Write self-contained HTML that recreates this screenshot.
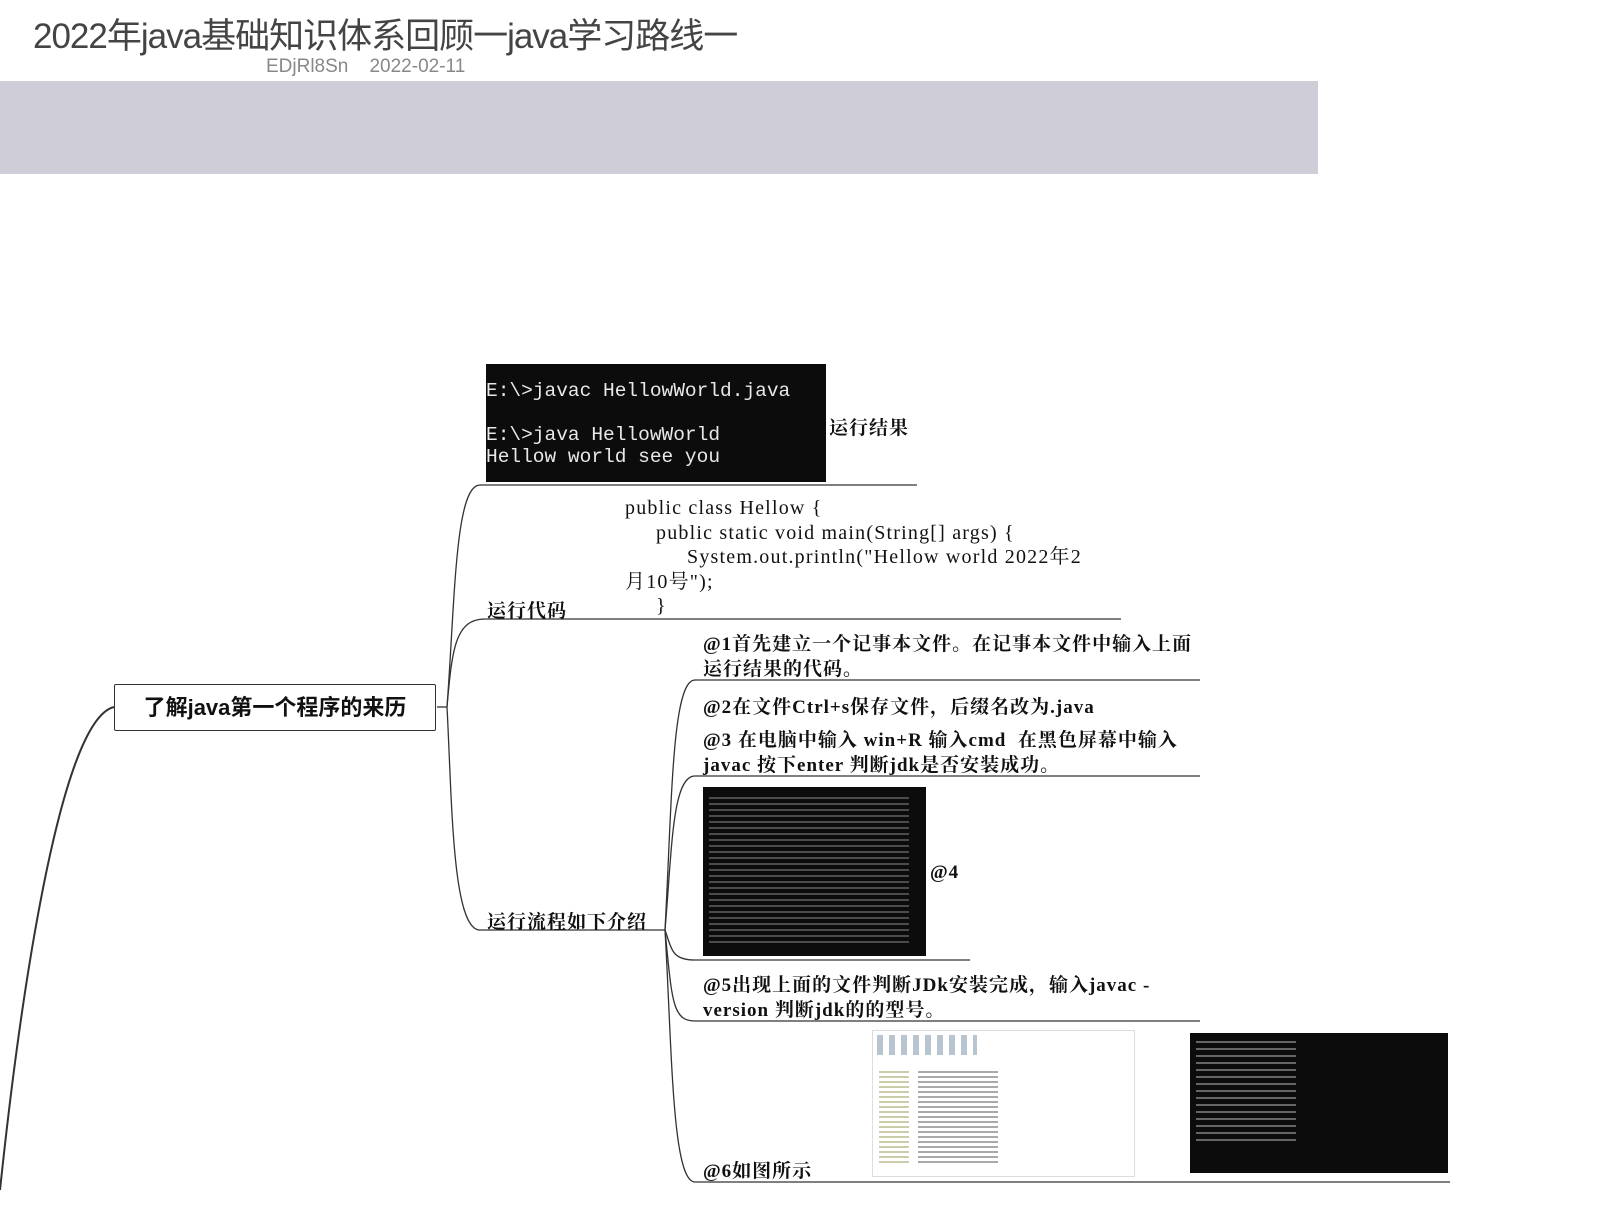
<!DOCTYPE html>
<html><head><meta charset="utf-8"><style>
body{margin:0;width:1598px;height:1221px;background:#fff;position:relative;overflow:hidden;font-family:"Liberation Sans","Noto Sans CJK SC",sans-serif}
.a{position:absolute;white-space:nowrap}
.s{font-family:"Liberation Serif","Noto Serif CJK SC",serif;font-size:19px;color:#111;font-weight:bold;letter-spacing:1px}
.m{font-family:"Liberation Mono","Noto Sans CJK SC",monospace;color:#e8e8e8;font-size:19.5px;line-height:22px}
</style></head><body>
<div class="a" style="left:33px;top:8px;font-size:35px;color:#444;letter-spacing:-1px">2022年java基础知识体系回顾一java学习路线一</div>
<div class="a" style="left:266px;top:56px;font-size:19px;color:#888">EDjRl8Sn&nbsp;&nbsp;&nbsp;&nbsp;2022-02-11</div>
<div class="a" style="left:0;top:81px;width:1318px;height:93px;background:#cfced8"></div>

<svg class="a" style="left:0;top:0" width="1598" height="1221">
<g fill="none" stroke="#333" stroke-width="1.3">
<path d="M0 1190 C20 1000 60 720 114 707" stroke-width="2"/>
<path d="M437 707 L447 707"/>
<path d="M447 707 C455 600 455 485 480 485 L917 485"/>
<path d="M447 707 C452 650 455 619 485 619 L1121 619"/>
<path d="M447 707 C452 800 452 930 480 930 L665 930"/>
<path d="M665 930 C672 800 672 680 695 680 L1200 680"/>
<path d="M665 930 C672 850 672 776 695 776 L1200 776"/>
<path d="M665 930 C672 950 672 960 695 960 L970 960"/>
<path d="M665 930 C672 1000 672 1021 695 1021 L1200 1021"/>
<path d="M665 930 C672 1050 672 1182 695 1182 L1450 1182"/>
</g></svg>

<div class="a" style="left:114px;top:684px;width:320px;height:45px;border:1.5px solid #333;border-radius:2px;font-size:22px;font-weight:bold;color:#111;line-height:45px;text-align:center">了解java第一个程序的来历</div>

<div class="a" style="left:486px;top:364px;width:340px;height:118px;background:#0c0c0c"></div>
<div class="a m" style="left:486px;top:380px">E:\&gt;javac HellowWorld.java<br><br>E:\&gt;java HellowWorld<br>Hellow world see you</div>
<div class="a s" style="left:829px;top:413px">运行结果</div>

<div class="a s" style="left:625px;top:496px;line-height:24.5px;font-weight:normal;font-size:20px;letter-spacing:1.2px">public class Hellow {<br>&nbsp;&nbsp;&nbsp;&nbsp;&nbsp;public static void main(String[] args) {<br>&nbsp;&nbsp;&nbsp;&nbsp;&nbsp;&nbsp;&nbsp;&nbsp;&nbsp;&nbsp;System.out.println("Hellow world 2022年2<br>月10号");<br>&nbsp;&nbsp;&nbsp;&nbsp;&nbsp;}</div>
<div class="a s" style="left:487px;top:596px">运行代码</div>
<div class="a s" style="left:487px;top:907px">运行流程如下介绍</div>

<div class="a s" style="left:703px;top:632px;line-height:25px">@1首先建立一个记事本文件。在记事本文件中输入上面<br>运行结果的代码。</div>
<div class="a s" style="left:703px;top:692px">@2在文件Ctrl+s保存文件，后缀名改为.java</div>
<div class="a s" style="left:703px;top:728px;line-height:25px">@3 在电脑中输入 win+R 输入cmd&nbsp; 在黑色屏幕中输入<br>javac 按下enter 判断jdk是否安装成功。</div>
<div class="a" style="left:703px;top:787px;width:223px;height:169px;background:#0c0c0c;overflow:hidden">
<div style="margin:10px 6px;height:150px;background:repeating-linear-gradient(180deg,#777 0 2px,transparent 2px 6px);opacity:.6;width:200px"></div></div>
<div class="a s" style="left:930px;top:862px">@4</div>
<div class="a s" style="left:703px;top:973px;line-height:25px">@5出现上面的文件判断JDk安装完成，输入javac -<br>version 判断jdk的的型号。</div>
<div class="a s" style="left:703px;top:1156px">@6如图所示</div>
<div class="a" style="left:872px;top:1030px;width:261px;height:145px;background:#fff;border:1px solid #ddd">
<div style="position:absolute;left:4px;top:4px;width:100px;height:20px;background:repeating-linear-gradient(90deg,#9ab 0 6px,#fff 6px 12px);opacity:.7"></div>
<div style="position:absolute;left:6px;top:40px;width:30px;height:95px;background:repeating-linear-gradient(180deg,#cca 0 2px,#fff 2px 5px)"></div>
<div style="position:absolute;left:45px;top:40px;width:80px;height:95px;background:repeating-linear-gradient(180deg,#aaa 0 2px,#fff 2px 5px)"></div>
</div>
<div class="a" style="left:1190px;top:1033px;width:258px;height:140px;background:#0c0c0c">
<div style="margin:8px 6px;height:100px;width:100px;background:repeating-linear-gradient(180deg,#666 0 2px,transparent 2px 7px)"></div></div>
</body></html>
